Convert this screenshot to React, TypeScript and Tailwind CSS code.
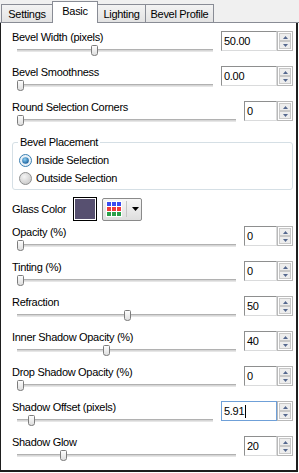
import React from 'react';

type RowProps = {
  label: string;
  value: string;
  pos: number;
  wide?: boolean;
  focused?: boolean;
};

function Thumb() {
  return (
    <svg width="7" height="11" viewBox="0 0 7 11" className="block">
      <defs>
        <linearGradient id="thumbFill" x1="0" y1="0" x2="0" y2="1">
          <stop offset="0" stopColor="#ffffff" />
          <stop offset="1" stopColor="#dcdcdc" />
        </linearGradient>
      </defs>
      <path
        d="M0.5 1.5 Q0.5 0.5 1.5 0.5 H5.5 Q6.5 0.5 6.5 1.5 V8.5 Q6.5 10.5 3.5 10.5 Q0.5 10.5 0.5 8.5 Z"
        fill="url(#thumbFill)"
        stroke="#7c7c7c"
      />
    </svg>
  );
}

function Spinner() {
  return (
    <div className="flex w-[16px] flex-col border border-[#b9b9b9] bg-white p-px">
      <div className="flex flex-1 items-center justify-center border border-[#c9c9c9] bg-[#ededed]">
        <svg width="5" height="3" viewBox="0 0 5 3"><path d="M2.5 0 L5 3 H0 Z" fill="#55688f" /></svg>
      </div>
      <div className="flex flex-1 items-center justify-center border border-[#c9c9c9] bg-[#ededed]">
        <svg width="5" height="3" viewBox="0 0 5 3"><path d="M0 0 H5 L2.5 3 Z" fill="#55688f" /></svg>
      </div>
    </div>
  );
}

function SliderRow({ label, value, pos, wide, focused }: RowProps) {
  return (
    <div className="flex h-[35px]">
      <div className="flex flex-1 flex-col">
        <div className="pt-px leading-[13px]">{label}</div>
        <div className="relative ml-[5px] mt-px h-[11px]">
          <div className="absolute left-0 right-0 top-[4px] h-[3px] border-t border-b border-t-[#b1b1b1] border-b-[#e6e6e6] bg-[#d6d6d6]" />
          <div className="absolute top-0" style={{ left: pos }}>
            <Thumb />
          </div>
        </div>
      </div>
      <div className={`ml-[8px] mt-px flex h-[20px] ${wide ? 'w-[72px]' : 'w-[49px]'}`}>
        <div
          className={`flex flex-1 items-center border pl-[2px] leading-[13px] ${
            focused
              ? 'border-[#6fa0d8]'
              : 'border-t-[#8e8f8f] border-l-[#8e8f8f] border-r-[#dadbdc] border-b-[#dadbdc]'
          }`}
        >
          {value}
          {focused && <span className="ml-px inline-block h-[13px] w-px bg-black" />}
        </div>
        <Spinner />
      </div>
    </div>
  );
}

function Radio({ checked, label }: { checked?: boolean; label: string }) {
  return (
    <div className="flex h-[18px] items-center">
      <svg width="13" height="13" viewBox="0 0 13 13" className="block">
        <defs>
          <radialGradient id="rOff" cx="0.4" cy="0.35" r="0.7">
            <stop offset="0" stopColor="#f4f4f4" />
            <stop offset="1" stopColor="#c8c8c8" />
          </radialGradient>
          <radialGradient id="rDot" cx="0.4" cy="0.35" r="0.7">
            <stop offset="0" stopColor="#8ad0f6" />
            <stop offset="1" stopColor="#155a96" />
          </radialGradient>
        </defs>
        <circle cx="6.5" cy="6.5" r="6" fill={checked ? '#e8f1f8' : 'url(#rOff)'} stroke={checked ? '#3c7fb1' : '#8e8f8f'} />
        {checked && <circle cx="6.5" cy="6.5" r="3.3" fill="url(#rDot)" />}
      </svg>
      <span className="ml-[4px] leading-[13px]">{label}</span>
    </div>
  );
}

export default function App() {
  const tab = 'flex items-center justify-center border border-b-0 border-[#898c95] leading-[13px]';
  return (
    <div className="h-[473px] w-[299px] bg-white font-['Liberation_Sans',Arial,sans-serif] text-[11px] tracking-[-0.3px] text-black">
      {/* tab strip */}
      <div className="flex h-[23px] items-end border-b border-[#898c95] bg-[#f0f0f0] pl-px">
        <div className={`${tab} h-[18px] w-[52px] bg-gradient-to-b from-[#f3f3f3] to-[#e3e3e3] pt-px`}>Settings</div>
        <div className={`${tab} relative z-10 -mb-px -ml-px h-[22px] w-[46px] bg-white pb-[3px]`}>Basic</div>
        <div className={`${tab} -ml-px h-[18px] w-[49px] bg-gradient-to-b from-[#f3f3f3] to-[#e3e3e3] pt-px`}>Lighting</div>
        <div className={`${tab} -ml-px h-[18px] w-[69px] bg-gradient-to-b from-[#f3f3f3] to-[#e3e3e3] pt-px`}>Bevel Profile</div>
      </div>

      {/* panel */}
      <div className="flex h-[449px] w-[298px] flex-col border-b-2 border-l border-r-2 border-[#1e1e1e] pl-[11px] pr-[3px] pt-[7px]">
        <SliderRow label="Bevel Width (pixels)" value="50.00" pos={74} wide />
        <SliderRow label="Bevel Smoothness" value="0.00" pos={0} wide />
        <SliderRow label="Round Selection Corners" value="0" pos={0} />

        <div className="relative mt-[7px] h-[48px] rounded-[3px] border border-[#d5dfe5] pl-[6px] pt-[8px]">
          <span className="absolute -top-[7px] left-[5px] bg-white px-[2px] leading-[13px]">Bevel Placement</span>
          <Radio checked label="Inside Selection" />
          <Radio label="Outside Selection" />
        </div>

        <div className="mt-[6px] flex h-[26px] items-center">
          <span className="leading-[13px]">Glass Color</span>
          <div className="ml-[7px] h-[24px] w-[24px] border border-black bg-white p-px">
            <div className="h-full w-full bg-[#575070]" />
          </div>
          <div className="ml-[5px] flex h-[23px] w-[40px] items-center rounded-[2px] border border-[#8a8a8a] bg-gradient-to-b from-[#f6f6f6] to-[#dedede] pl-[3px]">
            <div className="grid grid-cols-3 gap-px bg-white p-px">
              {['#3a4cf0', '#3a4cf0', '#3a4cf0', '#f03a3a', '#f03a3a', '#f03a3a', '#2aa04a', '#2aa04a', '#2aa04a'].map((c, i) => (
                <div key={i} className="h-[4px] w-[4px]" style={{ background: c }} />
              ))}
            </div>
            <div className="ml-[4px] h-[16px] w-px bg-[#c4c4c4]" />
            <svg width="7" height="4" viewBox="0 0 7 4" className="ml-[5px]"><path d="M0 0 H7 L3.5 4 Z" fill="#000" /></svg>
          </div>
        </div>

        <div className="mt-[3px]">
          <SliderRow label="Opacity (%)" value="0" pos={0} />
          <SliderRow label="Tinting (%)" value="0" pos={0} />
          <SliderRow label="Refraction" value="50" pos={107} />
          <SliderRow label="Inner Shadow Opacity (%)" value="40" pos={86} />
          <SliderRow label="Drop Shadow Opacity (%)" value="0" pos={0} />
          <SliderRow label="Shadow Offset (pixels)" value="5.91" pos={11} wide focused />
          <SliderRow label="Shadow Glow" value="20" pos={43} />
        </div>
      </div>
    </div>
  );
}
